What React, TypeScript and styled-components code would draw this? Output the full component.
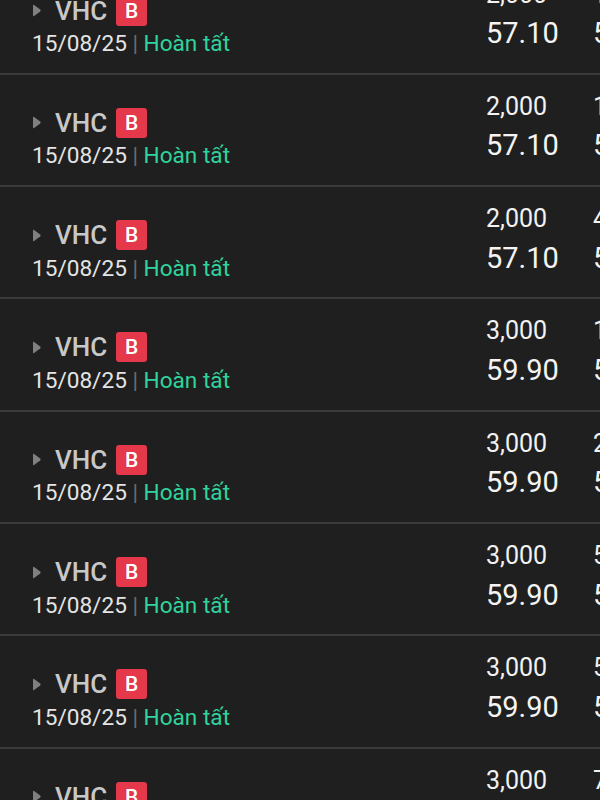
import React from "react";
import styled, { createGlobalStyle } from "styled-components";

const GlobalStyle = createGlobalStyle`
  html, body {
    margin: 0;
    padding: 0;
    background: #1f1f1f;
    overflow: hidden;
    font-family: Roboto, "Noto Sans", Arial, sans-serif;
  }
`;

const Page = styled.div`
  width: 600px;
  height: 800px;
  overflow: hidden;
  background: #1f1f1f;
`;

const List = styled.div`
  margin-top: -37.5px;
`;

const Row = styled.div`
  box-sizing: border-box;
  height: 112.33px;
  border-bottom: 2px solid #3a3a3a;
  display: grid;
  grid-template-columns: 454px 107px 140px;
  padding-left: 32px;
  white-space: nowrap;
`;

const Left = styled.div`
  display: flex;
  flex-direction: column;
  padding-top: 33px;
`;

const TitleLine = styled.div`
  display: flex;
  align-items: center;
  height: 30px;
`;

const Caret = styled.svg`
  width: 9px;
  height: 13px;
  margin-right: 14px;
  flex: none;
`;

const Symbol = styled.span`
  font-size: 26px;
  line-height: 30px;
  font-weight: 500;
  color: #c8c8c8;
`;

const Badge = styled.span`
  margin-left: 9px;
  width: 31px;
  height: 30px;
  border-radius: 3px;
  background: #e5384b;
  color: #ffffff;
  font-size: 21px;
  font-weight: 500;
  display: flex;
  align-items: center;
  justify-content: center;
`;

const SubLine = styled.div`
  margin-top: 5.4px;
  font-size: 22.6px;
  line-height: 26px;
  color: #e4e4e4;
`;

const Sep = styled.span`
  color: #6c6c6c;
`;

const Status = styled.span`
  color: #2fd49c;
`;

const NumCol = styled.div`
  display: flex;
  flex-direction: column;
  padding-top: 17px;
`;

const Qty = styled.div`
  font-size: 25px;
  line-height: 30px;
  color: #f2f2f2;
`;

const Price = styled.div`
  margin-top: 6.5px;
  font-size: 29px;
  line-height: 34px;
  color: #f4f4f4;
`;

type Order = {
  qty: string;
  price: string;
  q2: string;
  p2: string;
};

const orders: Order[] = [
  { qty: "2,000", price: "57.10", q2: "1,000", p2: "57.10" },
  { qty: "2,000", price: "57.10", q2: "1,000", p2: "57.10" },
  { qty: "2,000", price: "57.10", q2: "4,000", p2: "57.10" },
  { qty: "3,000", price: "59.90", q2: "1,000", p2: "59.90" },
  { qty: "3,000", price: "59.90", q2: "2,000", p2: "59.90" },
  { qty: "3,000", price: "59.90", q2: "5,000", p2: "59.90" },
  { qty: "3,000", price: "59.90", q2: "5,000", p2: "59.90" },
  { qty: "3,000", price: "59.90", q2: "7,000", p2: "59.90" },
];

const OrderRow: React.FC<{ o: Order }> = ({ o }) => (
  <Row>
    <Left>
      <TitleLine>
        <Caret viewBox="0 0 9 13">
          <path
            d="M1 1.4 Q1 0.2 2.1 0.9 L8.2 5.6 Q9 6.5 8.2 7.4 L2.1 12.1 Q1 12.8 1 11.6 Z"
            fill="#808080"
          />
        </Caret>
        <Symbol>VHC</Symbol>
        <Badge>B</Badge>
      </TitleLine>
      <SubLine>
        15/08/25<Sep> | </Sep>
        <Status>Hoàn tất</Status>
      </SubLine>
    </Left>
    <NumCol>
      <Qty>{o.qty}</Qty>
      <Price>{o.price}</Price>
    </NumCol>
    <NumCol>
      <Qty>{o.q2}</Qty>
      <Price>{o.p2}</Price>
    </NumCol>
  </Row>
);

export default function App() {
  return (
    <Page>
      <GlobalStyle />
      <List>
        {orders.map((o, i) => (
          <OrderRow key={i} o={o} />
        ))}
      </List>
    </Page>
  );
}
